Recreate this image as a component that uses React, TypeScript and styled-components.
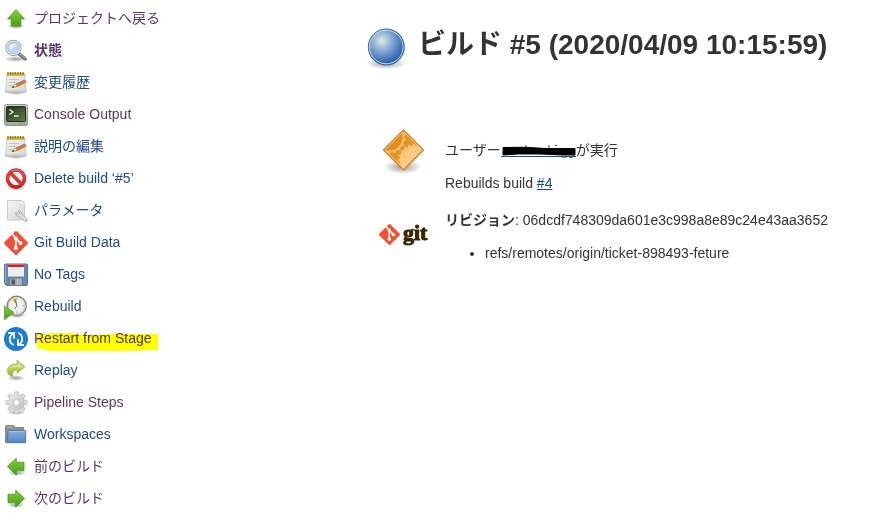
import React from "react";
import styled, { createGlobalStyle } from "styled-components";

const GlobalStyle = createGlobalStyle`
  body {
    margin: 0;
    background: #fff;
    color: #333;
    font-family: "Liberation Sans", "Noto Sans CJK JP", sans-serif;
    font-size: 14px;
    line-height: 20px;
  }
`;

const Page = styled.div`
  display: flex;
  align-items: flex-start;
`;

const SidePanel = styled.nav`
  flex: 0 0 320px;
  padding: 3px 0 8px 4px;
  box-sizing: border-box;
`;

const TaskList = styled.ul`
  list-style: none;
  margin: 0;
  padding: 0;
`;

const Task = styled.li`
  height: 32px;
`;

const TaskLink = styled.a<{ $visited?: boolean; $current?: boolean }>`
  display: inline-flex;
  align-items: flex-start;
  gap: 6px;
  padding-top: 4px;
  line-height: 22px;
  text-decoration: none;
  white-space: nowrap;
  color: ${(p) => (p.$visited ? "#5c3566" : "#204a87")};
  font-weight: ${(p) => (p.$current ? 700 : 400)};
`;

const TaskIcon = styled.svg`
  width: 24px;
  height: 24px;
  flex: none;
  overflow: visible;
`;

const TaskLabel = styled.span`
  position: relative;
`;

const Marker = styled.svg`
  position: absolute;
  left: 3px;
  top: 0;
  width: 121px;
  height: 24px;
  mix-blend-mode: multiply;
`;

const Main = styled.main`
  flex: 1;
  min-width: 0;
  padding: 24px 20px 20px 42px;
`;

const Heading = styled.h1`
  display: flex;
  gap: 8px;
  margin: 0 0 54px;
  font-size: 28px;
  line-height: 42px;
  white-space: nowrap;
`;

const LargeIcon = styled.svg`
  width: 48px;
  height: 48px;
  flex: none;
  overflow: visible;
`;

const Summary = styled.div`
  display: grid;
  gap: 14px;
  padding-left: 17px;
`;

const SummaryRow = styled.section`
  display: flex;
  align-items: flex-start;
  gap: 18px;
`;

const SummaryText = styled.div<{ $inset?: boolean }>`
  padding-top: ${(p) => (p.$inset ? "14px" : "0")};
`;

const Line = styled.p`
  margin: 0 0 13px;
`;

const CauseBlock = styled.div`
  display: grid;
  gap: 13px;
  padding-bottom: 3px;
`;

const CauseLine = styled.p`
  display: flex;
  margin: 0;
`;

const TextLink = styled.a`
  color: #204a87;
  text-decoration: underline;
`;

const MaskedLink = styled.a`
  display: block;
  height: 20px;
`;

const MaskDrawing = styled.svg`
  display: block;
  width: 75px;
  height: 20px;
  overflow: visible;
`;

const Refs = styled.ul`
  margin: 0;
  padding-left: 40px;
`;

const GitLogo = styled.div`
  width: 48px;
  height: 48px;
  flex: none;
  display: flex;
  align-items: center;
  gap: 3px;
`;

const GitMark = styled.svg`
  width: 21px;
  height: 21px;
  flex: none;
`;

const GitWord = styled.span`
  color: #362701;
  font: 700 22px/22px "Liberation Serif", serif;
  padding-bottom: 2px;
  -webkit-text-stroke: 1px #362701;
`;

const Definitions = () => (
  <defs>
    <linearGradient id="green" x1="0" y1="0" x2="0" y2="1">
      <stop offset="0" stopColor="#8ccd3c" />
      <stop offset="1" stopColor="#439f10" />
    </linearGradient>
    <linearGradient id="paper" x1="0" y1="0" x2="1" y2="1">
      <stop offset="0" stopColor="#f6f6f4" />
      <stop offset="1" stopColor="#d5d6d2" />
    </linearGradient>
    <linearGradient id="metal" x1="0" y1="0" x2="0" y2="1">
      <stop offset="0" stopColor="#d6d8d3" />
      <stop offset="1" stopColor="#a4a7a0" />
    </linearGradient>
    <linearGradient id="cog" x1="0" y1="0" x2="1" y2="1">
      <stop offset="0" stopColor="#ececec" />
      <stop offset="1" stopColor="#bdbdbd" />
    </linearGradient>
    <linearGradient id="blue" x1="0" y1="0" x2="0" y2="1">
      <stop offset="0" stopColor="#89b0db" />
      <stop offset="1" stopColor="#5585bd" />
    </linearGradient>
    <linearGradient id="red" x1="0" y1="0" x2="0" y2="1">
      <stop offset="0" stopColor="#ed5a5a" />
      <stop offset="1" stopColor="#cc1c1c" />
    </linearGradient>
    <linearGradient id="screen" x1="0" y1="0" x2="1" y2="1">
      <stop offset="0" stopColor="#1c3114" />
      <stop offset="1" stopColor="#5b7a48" />
    </linearGradient>
    <linearGradient id="olive" x1="0" y1="0" x2="0" y2="1">
      <stop offset="0" stopColor="#d3e083" />
      <stop offset="1" stopColor="#90b52e" />
    </linearGradient>
    <radialGradient id="shade">
      <stop offset="0" stopColor="#000" stopOpacity=".4" />
      <stop offset="1" stopColor="#000" stopOpacity="0" />
    </radialGradient>
    <radialGradient id="ball" cx=".38" cy=".33" r=".62">
      <stop offset="0" stopColor="#e6eed8" />
      <stop offset=".3" stopColor="#a4bfdc" />
      <stop offset=".75" stopColor="#5484bf" />
      <stop offset="1" stopColor="#3265a7" />
    </radialGradient>
    <linearGradient id="orange" x1="0" y1="0" x2="1" y2="1">
      <stop offset="0" stopColor="#de8a18" />
      <stop offset="1" stopColor="#eb9f35" />
    </linearGradient>
    <linearGradient id="peach" x1="0" y1="0" x2="1" y2="1">
      <stop offset="0" stopColor="#f6c070" />
      <stop offset="1" stopColor="#fbdcaa" />
    </linearGradient>
    <clipPath id="diamond">
      <path d="M24.500 6 42.500 24 24.500 42 6.500 24z" />
    </clipPath>
  </defs>
);

const ARROW_EDGE = "#4b9523";

interface GearTeethProps {
  cx: number;
  cy: number;
  r: number;
  n: number;
  w: number;
  h: number;
  fill: string;
}

const GearTeeth = ({ cx, cy, r, n, w, h, fill }: GearTeethProps) => (
  <>
    {Array.from({ length: n }, (_, i) => (
      <rect
        key={i}
        x={cx - w / 2}
        y={cy - r - h}
        width={w}
        height={h + 2}
        rx=".7"
        fill={fill}
        transform={`rotate(${(i * 360) / n} ${cx} ${cy})`}
      />
    ))}
  </>
);

const GitShape = () => (
  <>
    <path d="M10.900.5a1.500 1.500 0 0 1 2.200 0l10.400 10.400a1.500 1.500 0 0 1 0 2.200L13.100 23.500a1.500 1.500 0 0 1-2.200 0L.5 13.100a1.500 1.500 0 0 1 0-2.200z" fill="#f05033" />
    <path d="m8.200 3.200 3.600 3.800v10.500M12 7.500l4.500 4.600" fill="none" stroke="#fff" strokeWidth="1.800" />
    <circle cx="11.800" cy="7.400" r="1.900" fill="#fff" />
    <circle cx="16.400" cy="12.100" r="1.900" fill="#fff" />
    <circle cx="11.800" cy="17.300" r="2" fill="#fff" />
  </>
);

const NotepadShape = () => (
  <>
    <ellipse cx="12" cy="21.500" rx="12" ry="2.500" fill="url(#shade)" />
    <path d="M3 3h17.500l1.500 18H1.500z" fill="url(#paper)" stroke="#bcbdb9" strokeWidth=".8" />
    <path d="M1.800 19.500h20l.2 1.800H1.500z" fill="#c5c6c3" />
    <path d="M2.800 1.500h17.700v3.200H2.800z" fill="#c4ad35" />
    <path d="M4 1v2.500M6.500 1v2.500M9 1v2.500M11.500 1v2.500M14 1v2.500M16.500 1v2.500M19 1v2.500" stroke="#8a7722" strokeWidth="1" />
    <path d="M5 8.500h10M5 11.500h8M4.500 14.500h4" stroke="#c3c4c2" strokeWidth="1" />
    <path d="m8 16.500 3.500-3.300 8.500-4 1.500 2.300-8.500 4.200z" fill="#dd7f2b" stroke="#93571f" strokeWidth=".6" />
    <path d="m18.800 9.800 2-1q1.800.5 1.500 2.200l-2 1.100z" fill="#d9796c" />
    <path d="m8 16.500 3.400-3.200 1.500 2.300z" fill="#ead6a5" />
    <path d="m7.400 16.800 2.200-1.900.7 1.300z" fill="#222" />
  </>
);

const icons: Record<string, React.ReactNode> = {
  up: (
    <>
      <ellipse cx="12" cy="19.500" rx="9" ry="2.500" fill="url(#shade)" />
      <path d="M12 2.500 20.500 12h-3.700v7H7.200v-7H3.500z" fill="url(#green)" stroke={ARROW_EDGE} strokeWidth=".8" />
    </>
  ),
  search: (
    <>
      <ellipse cx="12" cy="20" rx="12" ry="3" fill="url(#shade)" />
      <path d="m15 14.800 6 5" stroke="#62647a" strokeWidth="3.400" strokeLinecap="round" />
      <path d="m16 15.200 5 4" stroke="#a9abbc" strokeWidth="1.300" strokeLinecap="round" />
      <circle cx="9.500" cy="9" r="7.600" fill="#cce1f7" stroke="#a0a3a0" strokeWidth="1.100" />
      <circle cx="9.500" cy="9" r="6.500" fill="none" stroke="#ededed" strokeWidth="1.300" />
      <circle cx="9.500" cy="9" r="5.700" fill="#bdd8f4" stroke="#86a5c8" strokeWidth=".6" />
      <path d="M5 9a4.500 4.500 0 0 1 8.300-2.200Q9 7 7.700 11z" fill="#fff" opacity=".6" />
    </>
  ),
  notepad: <NotepadShape />,
  terminal: (
    <>
      <rect x=".5" y="1.500" width="23" height="21" rx="2" fill="url(#metal)" stroke="#8f928b" />
      <rect x="2.500" y="3.500" width="19" height="15" rx="1" fill="url(#screen)" stroke="#222b1a" />
      <path d="M3 7h18M3 10h18M3 13h18M3 16h18" stroke="#9ab783" strokeWidth=".4" opacity=".3" />
      <path d="m5.500 6.500 3.500 2.500-3.500 2.500M10 13h4.500" fill="none" stroke="#edf5e3" strokeWidth="1.300" />
      <path d="M15 20.500h3" stroke="#888" />
      <circle cx="20.500" cy="20.500" r=".9" fill="#6ec72e" />
    </>
  ),
  stop: (
    <>
      <ellipse cx="12" cy="21" rx="10" ry="2.500" fill="url(#shade)" />
      <circle cx="12" cy="11.500" r="8.500" fill="#f5f5f4" stroke="#b82020" strokeWidth="3.600" />
      <circle cx="12" cy="11.500" r="8.500" fill="none" stroke="url(#red)" strokeWidth="2.600" />
      <path d="m6 5.500 12 12" stroke="#b82020" strokeWidth="3.600" />
      <path d="m5.800 5.300 12.400 12.400" stroke="#dd3838" strokeWidth="2.600" />
    </>
  ),
  parameters: (
    <>
      <path d="M3.500 1.500h13.500q3.500.5 3.500 4.500v15h-17z" fill="url(#paper)" stroke="#c6c8c3" strokeWidth=".9" />
      <path d="M16 1.500q1.200 2 .5 4.500 2-.7 4 .3-.5-4-4.500-4.800z" fill="#fff" stroke="#c6c8c3" strokeWidth=".6" />
      <path d="M14 12a3.700 3.700 0 0 1 4.500 4l4.500 4.200a1.300 1.300 0 0 1-1.900 1.900l-4.500-4.200a3.700 3.700 0 0 1-4.700-4.400l2.600 1.800 1.600-1.300z" fill="#dfe1dc" stroke="#a0a39d" strokeWidth=".8" />
      <path d="m17.500 17 4.500 4.200" stroke="#f5f5f3" strokeWidth=".8" />
    </>
  ),
  git: <GitShape />,
  floppy: (
    <>
      <path d="M1.500 1h21q1 0 1 1v19.500q0 1-1 1h-20l-2-2V2q0-1 1-1z" fill="#6288bb" stroke="#55749f" />
      <path d="M1.500 2v18" stroke="#94b2d7" />
      <rect x="4" y="1.500" width="16" height="12" fill="#f7f7f7" />
      <path d="M4 1.500h16v2.500H4z" fill="#dc2219" />
      <path d="M5.500 6.500h13M5.500 9h13M5.500 11.500h13" stroke="#d6d8da" strokeWidth=".8" />
      <path d="M5.500 15h13v7.500h-13z" fill="#a4a5a4" stroke="#6d7276" strokeWidth=".7" />
      <path d="M7.500 16.500h3.500v5H7.500z" fill="#4f5964" />
      <path d="M13.500 15.500v7M16 15.500v7" stroke="#d5d5d3" strokeWidth=".8" />
    </>
  ),
  clock: (
    <>
      <ellipse cx="13" cy="20.500" rx="10" ry="2.500" fill="url(#shade)" />
      <circle cx="12.700" cy="10.800" r="9.500" fill="#f0f0ec" stroke="#868885" strokeWidth="1.500" />
      <circle cx="12.700" cy="10.800" r="8.300" fill="none" stroke="#cfd1cc" strokeWidth="1.200" />
      <path d="M12.700 3.500v1.500M20 10.800h-1.500M12.700 18v-1.500" stroke="#999" strokeWidth=".9" />
      <path d="m8 5 3.500-2 1.800 5.500-2.800-1z" fill="#e3c548" />
      <path d="m11 4.500 2 6.300-2.500 3" fill="none" stroke="#555650" strokeWidth=".9" />
      <path d="M.3 10.800 10 17.500.3 25z" fill="url(#green)" stroke={ARROW_EDGE} strokeWidth=".6" />
    </>
  ),
  restart: (
    <>
      <circle cx="12" cy="12" r="12" fill="#1c7fd2" />
      <g fill="none" stroke="#fff" strokeWidth="1.800">
        <path d="M4.200 6h5.800v5.800" />
        <path d="M9.300 6.500A6.300 6.300 0 0 0 9.800 18" />
        <path d="M19.800 18H14v-5.800" />
        <path d="M14.700 17.500A6.300 6.300 0 0 0 14.200 6" />
      </g>
    </>
  ),
  replay: (
    <>
      <ellipse cx="12" cy="19" rx="9" ry="3" fill="url(#shade)" />
      <path d="M13 1 21 7.700l-8 6.500v-3.400Q8 11 8.500 18 2.500 15.500 3.500 10.500 4.800 5 13 4.800z" fill="url(#olive)" stroke="#a0b550" strokeWidth=".8" />
      <path d="M14 3.300 19.300 7.700l-2.300 1.600Q10 7 5 11.500 6 6 14 5.800z" fill="#f4f8cf" opacity=".4" />
    </>
  ),
  gear: (
    <>
      <ellipse cx="12.500" cy="21.500" rx="10" ry="2.500" fill="url(#shade)" />
      <GearTeeth cx={12.500} cy={11.500} r={7.500} n={8} w={4.400} h={3.500} fill="#b9bbb9" />
      <circle cx="12.500" cy="11.500" r="8.500" fill="#bcbdbb" />
      <GearTeeth cx={12.500} cy={11.500} r={7} n={8} w={3.200} h={3.400} fill="#d9d9d9" />
      <circle cx="12.500" cy="11.500" r="7.900" fill="url(#cog)" />
      <circle cx="12.500" cy="11.500" r="4.200" fill="#cfcfcf" />
      <circle cx="12.500" cy="11.500" r="2.900" fill="#fff" stroke="#b5b5b5" strokeWidth=".6" />
    </>
  ),
  folder: (
    <>
      <path d="M1.500 19.500V3.500q0-1 1-1h7l1.500 2h8.500v15z" fill="#91938f" stroke="#7b7e79" strokeWidth=".9" />
      <path d="M3 4h6" stroke="#b9bab7" />
      <path d="M4 7.500h17.700v12.200H3z" fill="url(#blue)" stroke="#4576b0" strokeWidth=".9" />
      <path d="M4.800 8.500h16" stroke="#a9c7e8" strokeWidth=".8" />
    </>
  ),
  left: (
    <>
      <ellipse cx="13" cy="18" rx="9" ry="3" fill="url(#shade)" />
      <path d="m3.300 11.500 9-8.300v4h7.700v8.600h-7.700v4.300z" fill="url(#green)" stroke={ARROW_EDGE} strokeWidth=".8" />
    </>
  ),
  right: (
    <>
      <ellipse cx="12" cy="18" rx="9" ry="3" fill="url(#shade)" />
      <path d="m20.700 11.500-9-8.300v4H4v8.600h7.700v4.300z" fill="url(#green)" stroke={ARROW_EDGE} strokeWidth=".8" />
    </>
  ),
};

interface TaskItem {
  label: string;
  icon: string;
  visited?: boolean;
  current?: boolean;
  marked?: boolean;
}

const tasks: TaskItem[] = [
  { label: "プロジェクトへ戻る", icon: "up", visited: true },
  { label: "状態", icon: "search", visited: true, current: true },
  { label: "変更履歴", icon: "notepad" },
  { label: "Console Output", icon: "terminal", visited: true },
  { label: "説明の編集", icon: "notepad" },
  { label: "Delete build ‘#5’", icon: "stop" },
  { label: "パラメータ", icon: "parameters" },
  { label: "Git Build Data", icon: "git" },
  { label: "No Tags", icon: "floppy" },
  { label: "Rebuild", icon: "clock" },
  { label: "Restart from Stage", icon: "restart", visited: true, marked: true },
  { label: "Replay", icon: "replay" },
  { label: "Pipeline Steps", icon: "gear", visited: true },
  { label: "Workspaces", icon: "folder" },
  { label: "前のビルド", icon: "left", visited: true },
  { label: "次のビルド", icon: "right", visited: true },
];

export default function App() {
  return (
    <Page lang="ja">
      <GlobalStyle />
      <SidePanel>
        <TaskList>
          {tasks.map((task, index) => (
            <Task key={task.label}>
              <TaskLink href="#" $visited={task.visited} $current={task.current}>
                <TaskIcon viewBox="0 0 24 24" aria-hidden="true">
                  {index === 0 && <Definitions />}
                  {icons[task.icon]}
                </TaskIcon>
                <TaskLabel>
                  {task.label}
                  {task.marked && (
                    <Marker viewBox="0 0 121 24" aria-hidden="true">
                      <path d="M0 7h12V6h25v1l10 1h16l8-1h50v16l-34 1-8 2H28l-1-1H13v-1L0 21z" fill="#ff0" />
                    </Marker>
                  )}
                </TaskLabel>
              </TaskLink>
            </Task>
          ))}
        </TaskList>
      </SidePanel>
      <Main>
        <Heading>
          <LargeIcon viewBox="0 0 48 48" aria-hidden="true">
            <ellipse cx="24" cy="39.500" rx="20" ry="6" fill="url(#shade)" />
            <circle cx="24.300" cy="23" r="18" fill="url(#ball)" stroke="#3c659f" strokeWidth="1" />
            <circle cx="24.300" cy="23" r="16.800" fill="none" stroke="#c5d7eb" strokeWidth="1" />
          </LargeIcon>
          ビルド #5 (2020/04/09 10:15:59)
        </Heading>
        <Summary>
          <SummaryRow>
            <LargeIcon viewBox="0 0 48 48" aria-hidden="true">
              <ellipse cx="23.500" cy="41" rx="19" ry="7" fill="url(#shade)" />
              <path d="M24.500 4 44.500 24 24.500 44 4.500 24z" fill="#f9cf93" stroke="#e0791b" strokeWidth="1.200" strokeLinejoin="round" />
              <g clipPath="url(#diamond)">
                <rect x="5" y="4" width="40" height="41" fill="url(#orange)" />
                <GearTeeth cx={10} cy={11} r={15} n={18} w={2.600} h={2} fill="#f5bd6b" />
                <circle cx="10" cy="11" r="15.500" fill="#f5bd6b" />
                <circle cx="10" cy="11" r="13.500" fill="#e08e1e" />
                <GearTeeth cx={35} cy={34} r={14} n={20} w={2.400} h={2} fill="#f6c070" />
                <circle cx="35" cy="34" r="14.500" fill="url(#peach)" />
              </g>
            </LargeIcon>
            <SummaryText $inset>
              <CauseBlock>
                <CauseLine>
                  ユーザー
                  <MaskedLink href="#" aria-label="実行者">
                    <MaskDrawing viewBox="0 0 75 20" aria-hidden="true">
                      <path d="M0 16.500h75" stroke="#204a87" />
                      <path d="M3 7.500h4M10 7.500h4M25 5v4M48 5v4M54 5.500h2M60 17h6M68 17q3 2 5-1v-4" fill="none" stroke="#204a87" />
                      <path d="M2 7.500q20-1 43 1h29v6.500H61l-22-1H17l-15 1z" fill="#000" stroke="#000" strokeLinejoin="round" />
                    </MaskDrawing>
                  </MaskedLink>
                  が実行
                </CauseLine>
                <CauseLine>
                  Rebuilds build&nbsp;<TextLink href="#">#4</TextLink>
                </CauseLine>
              </CauseBlock>
            </SummaryText>
          </SummaryRow>
          <SummaryRow>
            <GitLogo>
              <GitMark viewBox="0 0 24 24" aria-hidden="true">
                <GitShape />
              </GitMark>
              <GitWord>git</GitWord>
            </GitLogo>
            <SummaryText>
              <Line>
                <b>リビジョン</b>: 06dcdf748309da601e3c998a8e89c24e43aa3652
              </Line>
              <Refs>
                <li>refs/remotes/origin/ticket-898493-feture</li>
              </Refs>
            </SummaryText>
          </SummaryRow>
        </Summary>
      </Main>
    </Page>
  );
}
